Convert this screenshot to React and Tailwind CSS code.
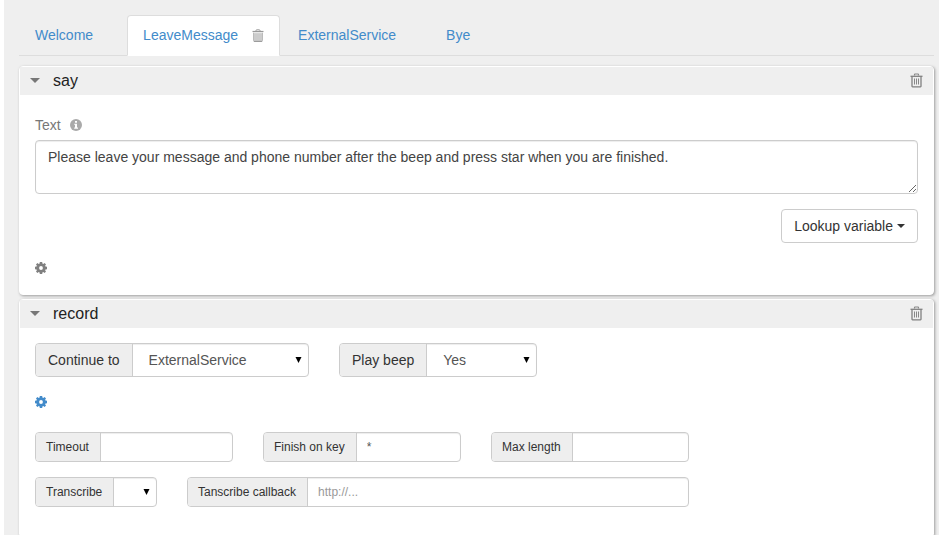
import { useId } from "react";

function TabTrashIcon() {
  return (
    <svg className="h-[13px] w-3" viewBox="0 0 12 13" fill="none">
      <path d="M4 2.5V1.5Q4 .8 4.700 .8H7.300Q8 .8 8 1.500V2.500" stroke="#999" />
      <path d="M.5 2.500H11.500" stroke="#999" strokeWidth="1.200" />
      <path d="M1.500 3H10.500V11.500Q10.500 12.500 9.500 12.500H2.500Q1.500 12.500 1.500 11.500Z" fill="#ccc" />
      <path d="M1.500 4V11.500Q1.500 12.500 2.500 12.500H9.500Q10.500 12.500 10.500 11.500V4" stroke="#bbb" />
      <path d="M2 3.700H10" stroke="#eee" />
      <path d="M2 12.400H10" stroke="#999" />
    </svg>
  );
}

function TrashIcon() {
  return (
    <svg className="h-[15px] w-[13px]" viewBox="0 0 13 15" fill="none">
      <path d="M4.500 2.500V1.500Q4.500 1 5 1H8Q8.500 1 8.500 1.500V2.500" stroke="#888" strokeWidth="1.200" />
      <path d="M.5 3.300H12.500" stroke="#808080" strokeWidth="1.300" />
      <path d="M2 3.500V13.300Q2 13.800 2.500 13.800H10.500Q11 13.800 11 13.300V3.500" stroke="#808080" strokeWidth="1.300" />
      <path d="M4.500 5.500V11.500M6.500 5.500V11.500M8.500 5.500V11.500" stroke="#888" />
    </svg>
  );
}

function CogIcon() {
  return (
    <svg className="size-3" viewBox="0 0 12 12" fill="currentColor">
      <path
        fillRule="evenodd"
        d="M4.800 0H7.200L7.400 1.500L8.300 1.900L9.600 1L11 2.400L10.100 3.700L10.500 4.600L12 4.800V7.200L10.500 7.400L10.100 8.300L11 9.600L9.600 11L8.300 10.100L7.400 10.500L7.200 12H4.800L4.600 10.500L3.700 10.100L2.400 11L1 9.600L1.900 8.300L1.500 7.400L0 7.200V4.800L1.500 4.600L1.900 3.700L1 2.400L2.400 1L3.700 1.900L4.600 1.500ZM6 4.100A1.900 1.900 0 1 0 6 7.900A1.900 1.900 0 1 0 6 4.100Z"
      />
    </svg>
  );
}

function InfoIcon() {
  return (
    <svg className="size-3" viewBox="0 0 12 12">
      <circle cx="6" cy="6" r="6" fill="#aaa" />
      <path d="M5 2H7V3.700H5ZM4.200 4.700H7V8.500H8V9.700H4.200V8.500H5V5.800H4.200Z" fill="#fff" />
    </svg>
  );
}

function Tab({ name, active = false }) {
  return (
    <li
      className={
        active
          ? "-mb-px flex items-center gap-3.5 rounded-t border border-b-white border-[#ddd] bg-white px-[15px] pt-[9px] pb-2.5"
          : "-mb-px flex items-center gap-1 border border-transparent px-[15px] pt-[9px] pb-2.5"
      }
    >
      <a href="#" className="text-[#428bca]">{name}</a>
      <button type="button" aria-label={`Remove ${name}`} className={active ? "block" : "invisible block"}>
        <TabTrashIcon />
      </button>
    </li>
  );
}

function Panel({ title, className, children }) {
  return (
    <section className={`rounded border border-white bg-white shadow-[1px_1px_3px_rgba(0,0,0,0.35)] ${className}`}>
      <header className="flex h-7 items-center bg-[#efefef] px-2.5 pb-0.5">
        <button type="button" aria-label={`Collapse ${title}`} className="mr-[13px] block">
          <svg className="h-[5px] w-2.5" viewBox="0 0 10 5">
            <path d="M0 0H10L5 5Z" fill="#777" />
          </svg>
        </button>
        <h2 className="flex-1 pt-0.5 text-base leading-6 text-[#222]">{title}</h2>
        <button type="button" aria-label={`Delete ${title}`} className="block">
          <TrashIcon />
        </button>
      </header>
      <div className="p-[15px]">{children}</div>
    </section>
  );
}

function Group({ label, small = false, className, children }) {
  const id = useId();
  return (
    <div
      className={`flex rounded border border-[#ccc] bg-white text-[#555] shadow-[inset_0_1px_1px_rgba(0,0,0,0.075)] ${
        small ? "h-[30px] text-xs" : "h-[34px]"
      } ${className}`}
    >
      <label
        htmlFor={id}
        className={`flex shrink-0 items-center rounded-l-[3px] border-r border-[#ccc] bg-[#eee] whitespace-nowrap text-[#333] ${
          small ? "pr-[11px] pl-2.5" : "px-3"
        }`}
      >
        {label}
      </label>
      {children(id)}
    </div>
  );
}

function Select({ id, options }) {
  return (
    <div className="relative min-w-0 flex-1">
      <select id={id} className="h-full w-full appearance-none bg-transparent px-4 outline-none">
        {options.map((o) => (
          <option key={o}>{o}</option>
        ))}
      </select>
      <svg className="pointer-events-none absolute top-1/2 right-1.5 h-1.5 w-[7px] -translate-y-1/2" viewBox="0 0 7 6">
        <path d="M.5 0H6.500L3.500 6Z" fill="#000" />
      </svg>
    </div>
  );
}

function SmallInput({ id, ...rest }) {
  return <input id={id} type="text" className="min-w-0 flex-1 bg-transparent px-2.5 outline-none placeholder:text-[#999]" {...rest} />;
}

export default function App() {
  return (
    <div className="flex min-h-screen bg-white pl-1 font-['Liberation_Sans',Arial,sans-serif] text-sm leading-5 text-[#333]">
      <main className="flex min-w-0 flex-1 flex-col bg-[#efefef] pt-[15px] pr-[5px] pl-[15px]">
        <ul className="flex gap-0.5 border-b border-[#ddd]">
          <Tab name="Welcome" />
          <Tab name="LeaveMessage" active />
          <Tab name="ExternalService" />
          <Tab name="Bye" />
        </ul>

        <Panel title="say" className="mt-2.5">
          <div className="flex items-center gap-[9px] py-[5px] text-[#777]">
            <label htmlFor="say-text">Text</label>
            <InfoIcon />
          </div>
          <textarea
            id="say-text"
            className="block h-[54px] w-full resize-y rounded border border-[#ccc] px-3 py-1.5 text-[#444] shadow-[inset_0_1px_1px_rgba(0,0,0,0.075)] outline-none"
            defaultValue="Please leave your message and phone number after the beep and press star when you are finished."
          />
          <div className="mt-[15px] flex justify-end">
            <button type="button" className="flex h-[34px] items-center gap-1 rounded border border-[#ccc] bg-white px-3">
              Lookup variable
              <svg className="h-1 w-2" viewBox="0 0 8 4">
                <path d="M0 0H8L4 4Z" fill="#333" />
              </svg>
            </button>
          </div>
          <button type="button" aria-label="Say options" className="mt-[19px] mb-[5px] block text-[#808080]">
            <CogIcon />
          </button>
        </Panel>

        <Panel title="record" className="mt-1 flex-1 rounded-b-none">
          <div className="flex flex-wrap gap-[30px]">
            <Group label="Continue to" className="w-[274px]">
              {(id) => <Select id={id} options={["ExternalService", "Welcome", "LeaveMessage", "Bye"]} />}
            </Group>
            <Group label="Play beep" className="w-[198px]">
              {(id) => <Select id={id} options={["Yes", "No"]} />}
            </Group>
          </div>
          <button type="button" aria-label="Record options" className="mt-[19px] block text-[#428bca]">
            <CogIcon />
          </button>
          <div className="mt-6 flex flex-wrap gap-[30px]">
            <Group small label="Timeout" className="w-[198px]">
              {(id) => <SmallInput id={id} />}
            </Group>
            <Group small label="Finish on key" className="w-[198px]">
              {(id) => <SmallInput id={id} defaultValue="*" />}
            </Group>
            <Group small label="Max length" className="w-[198px]">
              {(id) => <SmallInput id={id} />}
            </Group>
          </div>
          <div className="mt-[15px] flex flex-wrap gap-[30px]">
            <Group small label="Transcribe" className="w-[122px]">
              {(id) => <Select id={id} options={["", "Yes", "No"]} />}
            </Group>
            <Group small label="Tanscribe callback" className="w-[502px]">
              {(id) => <SmallInput id={id} placeholder="http://..." />}
            </Group>
          </div>
        </Panel>
      </main>
    </div>
  );
}
